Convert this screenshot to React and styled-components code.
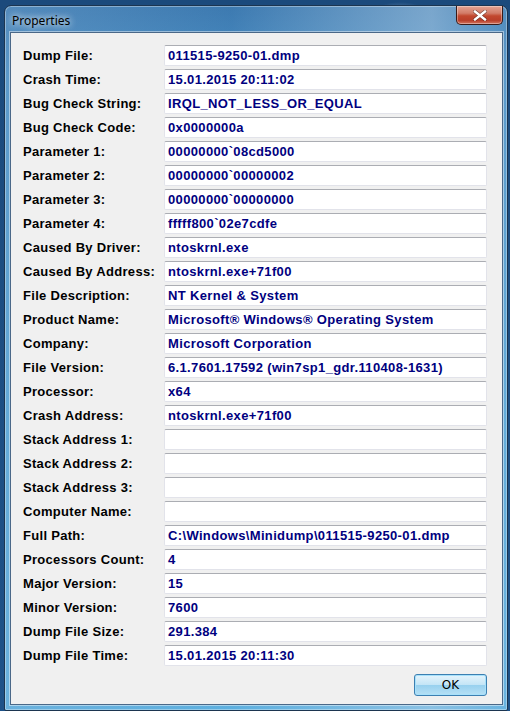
import React from "react";
import styled, { createGlobalStyle } from "styled-components";

const GlobalStyle = createGlobalStyle`
  html, body { margin: 0; padding: 0; }
  body {
    background: #173f6c;
    font-family: "Liberation Sans", Arial, sans-serif;
  }
`;

const Desktop = styled.div`
  width: 510px;
  height: 711px;
  overflow: hidden;
  padding: 5px 0 0 4px;
  box-sizing: border-box;
  background:
    radial-gradient(ellipse 30px 14px at 400px 16px, rgba(190, 215, 235, 0.55), transparent),
    linear-gradient(180deg, #1b4a7c 0%, #1e5288 100%);
`;

const Window = styled.div`
  width: 504px;
  height: 706px;
  box-sizing: border-box;
  border: 1px solid #1c3550;
  border-radius: 7px 7px 2px 2px;
  padding: 0 4px 5px 5px;
  display: flex;
  flex-direction: column;
  background:
    linear-gradient(90deg, rgba(120, 165, 205, 0.35) 0%, rgba(40, 100, 160, 0.1) 45%, rgba(170, 200, 225, 0.55) 85%, rgba(120, 170, 210, 0.3) 100%),
    linear-gradient(180deg, #3f7cb2 0%, #4d93c8 10%, #5aaede 60%, #63b8e6 100%);
  box-shadow: inset 0 0 0 1px rgba(255, 255, 255, 0.35);
`;

const TitleBar = styled.div`
  height: 26px;
  display: flex;
  align-items: flex-start;
  flex-shrink: 0;
`;

const Title = styled.span`
  font-family: "Noto Sans", "Open Sans", sans-serif;
  font-size: 12px;
  color: #000;
  padding: 7px 0 0 2px;
  line-height: 16px;
  text-shadow: 0 0 6px rgba(255, 255, 255, 0.9), 0 0 10px rgba(255, 255, 255, 0.6);
`;

const CloseButton = styled.div`
  margin-left: auto;
  width: 47px;
  height: 19px;
  box-sizing: border-box;
  border: 1px solid #3b1b18;
  border-top: none;
  border-radius: 0 0 5px 5px;
  background: linear-gradient(180deg, #e5a493 0%, #d27c68 40%, #c2482f 55%, #b93f2a 80%, #d27560 100%);
  box-shadow: inset 0 0 0 1px rgba(255, 255, 255, 0.35);
  display: flex;
  align-items: center;
  justify-content: center;
`;

const Client = styled.div`
  flex: 1;
  background: #f0f0f0;
  border: 1px solid #4a6888;
  box-shadow: 0 0 0 1px rgba(255, 255, 255, 0.45);
  padding: 12px 14px 0 12px;
  display: flex;
  flex-direction: column;
`;

const Grid = styled.div`
  display: grid;
  grid-template-columns: 141px 323px;
  grid-auto-rows: 21px;
  row-gap: 3px;
  align-items: center;
`;

const Label = styled.div`
  font-family: "Liberation Sans", Arial, sans-serif;
  font-weight: bold;
  font-size: 13px;
  letter-spacing: 0.3px;
  color: #000;
  white-space: nowrap;
`;

const Field = styled.div`
  height: 21px;
  box-sizing: border-box;
  background: #fff;
  border: 1px solid #e2e3ea;
  border-top-color: #abadb3;
  border-radius: 2px;
  padding: 0 3px;
  display: flex;
  align-items: center;
  font-family: "Liberation Sans", Arial, sans-serif;
  font-weight: bold;
  font-size: 13px;
  letter-spacing: 0.35px;
  color: #000080;
  white-space: nowrap;
  overflow: hidden;
`;

const Footer = styled.div`
  display: flex;
  justify-content: flex-end;
  padding: 8px 1px 0 0;
`;

const OkButton = styled.button`
  width: 73px;
  height: 22px;
  box-sizing: border-box;
  border: 1px solid #3c7fb1;
  border-radius: 3px;
  background: linear-gradient(180deg, #e5f4fc 0%, #c4e5f6 48%, #98d1ef 52%, #b6e0f5 100%);
  box-shadow: inset 0 0 0 1px #a7e1fb;
  font-family: "DejaVu Sans", "Liberation Sans", sans-serif;
  font-size: 12px;
  color: #000;
  padding: 0;
`;

const rows = [
  ["Dump File:", "011515-9250-01.dmp"],
  ["Crash Time:", "15.01.2015 20:11:02"],
  ["Bug Check String:", "IRQL_NOT_LESS_OR_EQUAL"],
  ["Bug Check Code:", "0x0000000a"],
  ["Parameter 1:", "00000000`08cd5000"],
  ["Parameter 2:", "00000000`00000002"],
  ["Parameter 3:", "00000000`00000000"],
  ["Parameter 4:", "fffff800`02e7cdfe"],
  ["Caused By Driver:", "ntoskrnl.exe"],
  ["Caused By Address:", "ntoskrnl.exe+71f00"],
  ["File Description:", "NT Kernel & System"],
  ["Product Name:", "Microsoft® Windows® Operating System"],
  ["Company:", "Microsoft Corporation"],
  ["File Version:", "6.1.7601.17592 (win7sp1_gdr.110408-1631)"],
  ["Processor:", "x64"],
  ["Crash Address:", "ntoskrnl.exe+71f00"],
  ["Stack Address 1:", ""],
  ["Stack Address 2:", ""],
  ["Stack Address 3:", ""],
  ["Computer Name:", ""],
  ["Full Path:", "C:\\Windows\\Minidump\\011515-9250-01.dmp"],
  ["Processors Count:", "4"],
  ["Major Version:", "15"],
  ["Minor Version:", "7600"],
  ["Dump File Size:", "291.384"],
  ["Dump File Time:", "15.01.2015 20:11:30"],
];

const CloseGlyph = () => (
  <svg width="14" height="11" viewBox="0 0 14 11">
    <path
      d="M2 1.5 L12 9.5 M12 1.5 L2 9.5"
      stroke="#3a1a14"
      strokeWidth="3.6"
      strokeLinecap="square"
      opacity="0.55"
    />
    <path
      d="M2 1.5 L12 9.5 M12 1.5 L2 9.5"
      stroke="#fff"
      strokeWidth="2.4"
      strokeLinecap="square"
    />
  </svg>
);

export default function App() {
  return (
    <>
      <GlobalStyle />
      <Desktop>
        <Window>
          <TitleBar>
            <Title>Properties</Title>
            <CloseButton>
              <CloseGlyph />
            </CloseButton>
          </TitleBar>
          <Client>
            <Grid>
              {rows.map(([label, value]) => (
                <React.Fragment key={label}>
                  <Label>{label}</Label>
                  <Field>{value}</Field>
                </React.Fragment>
              ))}
            </Grid>
            <Footer>
              <OkButton>OK</OkButton>
            </Footer>
          </Client>
        </Window>
      </Desktop>
    </>
  );
}
